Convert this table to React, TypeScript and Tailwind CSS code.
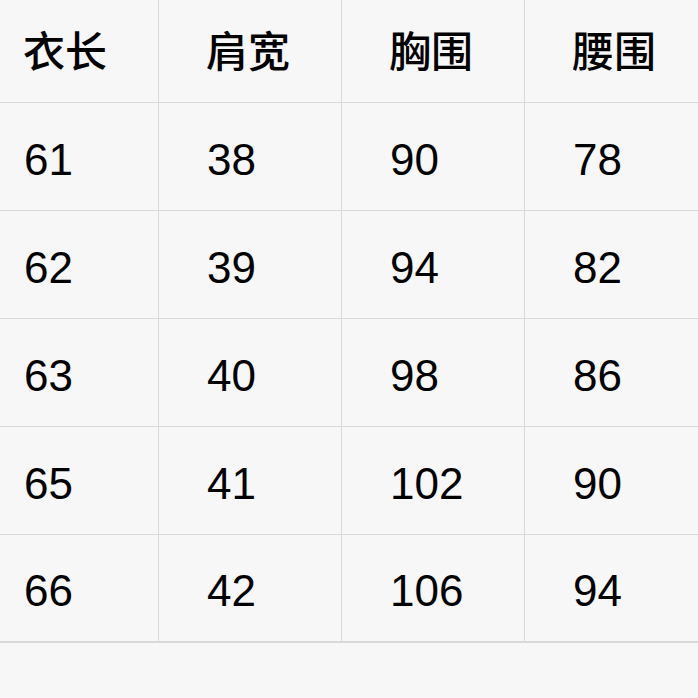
const headers = ["衣长", "肩宽", "胸围", "腰围"];

const rows = [
  ["61", "38", "90", "78"],
  ["62", "39", "94", "82"],
  ["63", "40", "98", "86"],
  ["65", "41", "102", "90"],
  ["66", "42", "106", "94"],
];

const font = "font-['Liberation_Sans','Noto_Sans_CJK_SC',sans-serif]";

export default function App() {
  return (
    <div className={`w-[698px] h-[698px] bg-[#f7f7f7] overflow-hidden ${font} text-black`}>
      <div className="grid grid-cols-[159px_183px_183px_1fr] border-b-2 border-[#d9d9d9]">
        {headers.map((h, i) => (
          <div
            key={h}
            className={`h-[103px] flex items-center pb-[4px] border-b border-[#d9d9d9] ${
              i < 3 ? "border-r" : ""
            } ${i === 0 ? "pl-[23px]" : "pl-[47px]"}`}
          >
            <span className="text-[42px] font-medium leading-none font-['Noto_Sans_CJK_SC',sans-serif]">
              {h}
            </span>
          </div>
        ))}
        {rows.map((row, r) =>
          row.map((v, i) => (
            <div
              key={`${r}-${i}`}
              className={`${r === rows.length - 1 ? "h-[106px]" : "h-[108px] border-b"} border-[#d9d9d9] flex items-center pt-[6px] ${
                i < 3 ? "border-r" : ""
              } ${i === 0 ? "pl-[24px]" : "pl-[48px]"}`}
            >
              <span className="text-[44px] leading-none">{v}</span>
            </div>
          ))
        )}
      </div>
    </div>
  );
}
